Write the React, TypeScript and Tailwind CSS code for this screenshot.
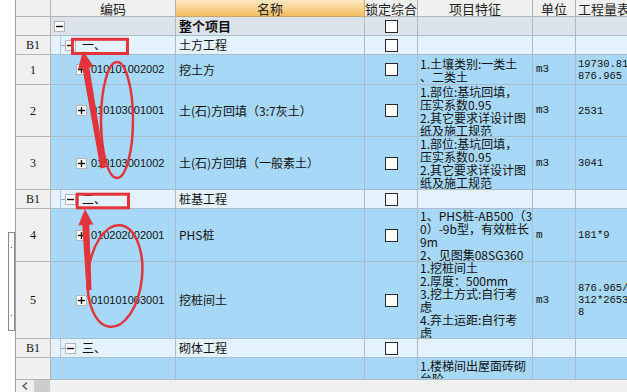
import React from "react";

type Kind = "root" | "group" | "item" | "blank";

interface RowData {
  h: number;
  kind: Kind;
  rn?: string;
  code?: string;
  name?: string;
  feats?: string[];
  unit?: string;
  expr?: string[];
  check?: boolean;
  top?: boolean;
}

const rows: RowData[] = [
  { h: 19, kind: "root", name: "整个项目", check: true },
  { h: 19, kind: "group", rn: "B1", code: "一、", name: "土方工程", check: true },
  { h: 30, kind: "item", rn: "1", code: "010101002002", name: "挖土方", feats: ["1.土壤类别:一类土", "、二类土"], unit: "m3", expr: ["19730.818", "876.965"], check: true },
  { h: 52, kind: "item", rn: "2", code: "010103001001", name: "土(石)方回填（3:7灰土）", feats: ["1.部位:基坑回填，", "压实系数0.95", "2.其它要求详设计图", "纸及施工规范"], unit: "m3", expr: ["2531"], check: true },
  { h: 53, kind: "item", rn: "3", code: "010103001002", name: "土(石)方回填（一般素土）", feats: ["1.部位:基坑回填，", "压实系数0.95", "2.其它要求详设计图", "纸及施工规范"], unit: "m3", expr: ["3041"], check: true },
  { h: 19, kind: "group", rn: "B1", code: "二、", name: "桩基工程", check: true },
  { h: 53, kind: "item", rn: "4", code: "010202002001", name: "PHS桩", feats: ["1、PHS桩-AB500（30", "0）-9b型，有效桩长", "9m", "2、见图集08SG360"], unit: "m", expr: ["181*9"], check: true },
  { h: 77, kind: "item", rn: "5", code: "010101003001", name: "挖桩间土", feats: ["1.挖桩间土", "2.厚度：500mm", "3.挖土方式:自行考", "虑", "4.弃土运距:自行考", "虑"], unit: "m3", expr: ["876.965/3", "312*26539", "8"], check: true },
  { h: 19, kind: "group", rn: "B1", code: "三、", name: "砌体工程", check: true },
  { h: 22, kind: "blank", feats: ["1.楼梯间出屋面砖砌", "台阶"], top: true },
];

function TreeBox({ plus }: { plus: boolean }) {
  return (
    <div className="w-[11px] h-[11px] shrink-0 bg-white border border-[#b4b4b4] flex items-center justify-center">
      <svg width="9" height="9" viewBox="0 0 9 9">
        <line x1="1" y1="4.5" x2="8" y2="4.5" stroke="#111" strokeWidth="1.4" />
        {plus && <line x1="4.5" y1="1" x2="4.5" y2="8" stroke="#111" strokeWidth="1.4" />}
      </svg>
    </div>
  );
}

function CheckBox() {
  return <div className="w-[13px] h-[13px] bg-white border border-[#2b2b2b]" />;
}

function CodeCell({ r }: { r: RowData }) {
  if (r.kind === "root") {
    return (
      <div className="flex items-center h-full pl-[3px]">
        <TreeBox plus={false} />
      </div>
    );
  }
  if (r.kind === "group") {
    return (
      <div className="flex items-center h-full">
        <div className="w-[9px] shrink-0" />
        <div className="w-px self-stretch bg-[#b9c6d0] shrink-0" />
        <div className="w-[4px] h-px bg-[#9aa6ae] shrink-0" />
        <TreeBox plus={false} />
        <span className="ml-[6px] text-[12px] text-[#111] font-['Noto_Sans_CJK_SC',sans-serif] leading-none">{r.code}</span>
      </div>
    );
  }
  if (r.kind === "item") {
    return (
      <div className="flex items-center h-full">
        <div className="w-[9px] shrink-0" />
        <div className="w-px self-stretch bg-[#bfd0dc] shrink-0" />
        <div className="w-[10px] shrink-0" />
        <div className="w-px self-stretch bg-[#bfd0dc] shrink-0" />
        <div className="w-[4px] shrink-0" />
        <TreeBox plus={true} />
        <span className="ml-[4px] text-[11px] text-[#111] font-['Liberation_Sans',sans-serif] leading-none">{r.code}</span>
      </div>
    );
  }
  return (
    <div className="flex items-center h-full">
      <div className="w-[9px] shrink-0" />
      <div className="w-px self-stretch bg-[#bfd0dc] shrink-0" />
    </div>
  );
}

function Row({ r }: { r: RowData }) {
  const bg =
    r.kind === "root" ? "bg-[#dde3eb]" : r.kind === "group" ? "bg-[#e3f2fc]" : "bg-[#a8d8f7]";
  const line = "border-[#a9bccb]";
  return (
    <div className="flex shrink-0" style={{ height: r.h }}>
      <div className="w-[35px] shrink-0 bg-[#f0f0f0] border-r border-b border-[#b4b4b4] flex items-center justify-center text-[12px] text-[#111] font-['Liberation_Serif',serif]">
        {r.rn}
      </div>
      <div className={`flex flex-1 ${bg}`}>
        <div className={`w-[125px] shrink-0 border-r border-b ${line} overflow-hidden`}>
          <CodeCell r={r} />
        </div>
        <div className={`w-[189px] shrink-0 border-r border-b ${line} flex items-center pl-[3px] text-[#111] font-['Noto_Sans_CJK_SC',sans-serif] whitespace-nowrap overflow-hidden ${r.kind === "root" ? "text-[13px] font-bold" : "text-[12px]"}`}>
          {r.name}
        </div>
        <div className={`w-[53px] shrink-0 border-r border-b ${line} flex items-center justify-center`}>
          {r.check && <CheckBox />}
        </div>
        <div className={`w-[115px] shrink-0 border-r border-b ${line} flex flex-col ${r.top ? "justify-start pt-[1px]" : "justify-center"} pl-[2px] overflow-hidden text-[12px] leading-[13px] text-[#111] font-['Noto_Sans_CJK_SC',sans-serif]`}>
          {r.feats?.map((f, i) => (
            <div key={i} className="whitespace-nowrap h-[13px]">{f}</div>
          ))}
        </div>
        <div className={`w-[43px] shrink-0 border-r border-b ${line} flex items-center pl-[3px] text-[11px] text-[#111] font-['Liberation_Mono',monospace]`}>
          {r.unit}
        </div>
        <div className={`flex-1 border-b ${line} flex flex-col justify-center pl-[2px] overflow-hidden text-[10.5px] leading-[12px] text-[#111] font-['Liberation_Mono',monospace]`}>
          {r.expr?.map((e, i) => (
            <div key={i} className="whitespace-nowrap">{e}</div>
          ))}
        </div>
      </div>
    </div>
  );
}

function arrow(tip: [number, number], tail: [number, number], headLen: number, headHalf: number, s1: number, s2: number) {
  const dx = tail[0] - tip[0];
  const dy = tail[1] - tip[1];
  const len = Math.hypot(dx, dy);
  const ux = dx / len;
  const uy = dy / len;
  const px = -uy;
  const py = ux;
  const bx = tip[0] + ux * headLen;
  const by = tip[1] + uy * headLen;
  const pts: [number, number][] = [
    tip,
    [bx + px * headHalf, by + py * headHalf],
    [bx + px * s1, by + py * s1],
    [tail[0] + px * s2, tail[1] + py * s2],
    [tail[0] - px * s2, tail[1] - py * s2],
    [bx - px * s1, by - py * s1],
    [bx - px * headHalf, by - py * headHalf],
  ];
  return pts.map((p) => `${p[0].toFixed(1)},${p[1].toFixed(1)}`).join(" ");
}

export default function App() {
  const red = "#e2343a";
  return (
    <div className="relative w-[627px] h-[392px] flex bg-white overflow-hidden select-none">
      <div className="w-[16px] shrink-0 bg-white border-r border-[#a0a0a0] flex flex-col pt-[232px] pl-[8px]">
        <div className="w-[7px] h-[99px] border border-[#8a8a8a] bg-white flex flex-col justify-between items-center py-[14px]">
          <div className="w-px h-px bg-[#555]" />
          <div className="w-px h-px bg-[#555]" />
        </div>
      </div>
      <div className="flex-1 flex flex-col">
        <div className="h-[380px] flex flex-col overflow-hidden">
          <div className="flex h-[17px] shrink-0 text-[13px] text-[#222] font-['Noto_Sans_CJK_SC',sans-serif] leading-none">
            <div className="w-[35px] shrink-0 bg-[#f0f0f0] border-r border-b border-[#b4b4b4]" />
            <div className="w-[125px] shrink-0 bg-[#f0f0f0] border-r border-b border-[#b4b4b4] flex items-center justify-center">编码</div>
            <div className="w-[189px] shrink-0 bg-gradient-to-b from-[#fde9c2] to-[#f4bd5e] border-r border-b border-[#c9a66a] flex items-center justify-center">名称</div>
            <div className="w-[53px] shrink-0 bg-[#f0f0f0] border-r border-b border-[#b4b4b4] flex items-center justify-center whitespace-nowrap overflow-hidden">锁定综合</div>
            <div className="w-[115px] shrink-0 bg-[#f0f0f0] border-r border-b border-[#b4b4b4] flex items-center justify-center">项目特征</div>
            <div className="w-[43px] shrink-0 bg-[#f0f0f0] border-r border-b border-[#b4b4b4] flex items-center justify-center">单位</div>
            <div className="flex-1 bg-[#f0f0f0] border-b border-[#b4b4b4] flex items-center pl-[2px] whitespace-nowrap overflow-hidden">工程量表达式</div>
          </div>
          {rows.map((r, i) => (
            <Row key={i} r={r} />
          ))}
        </div>
        <div className="h-[12px] shrink-0 bg-[#f0f0f0] flex items-center">
          <div className="w-[18px] flex items-center justify-center">
            <svg width="6" height="8" viewBox="0 0 6 8">
              <polyline points="5,0.5 1,4 5,7.5" fill="none" stroke="#555" strokeWidth="1.4" />
            </svg>
          </div>
          <div className="w-[16px] h-full bg-[#cdcdcd]" />
        </div>
      </div>
      <svg className="absolute inset-0 pointer-events-none" width="627" height="392" viewBox="0 0 627 392">
        <rect x="72.5" y="39.3" width="55" height="14.2" fill="none" stroke={red} strokeWidth="3" />
        <rect x="77.2" y="194.2" width="51.3" height="13.6" fill="none" stroke={red} strokeWidth="3" />
        <ellipse cx="117" cy="120" rx="16" ry="58" fill="none" stroke={red} strokeWidth="2.5" />
        <ellipse cx="115" cy="276" rx="27" ry="51" transform="rotate(6 115 276)" fill="none" stroke={red} strokeWidth="2.5" />
        <polygon points={arrow([83, 51], [103, 168], 17, 8, 3.5, 2.5)} fill={red} />
        <polygon points={arrow([85, 209], [89, 290], 16, 7.5, 3.5, 2.5)} fill={red} />
      </svg>
    </div>
  );
}
